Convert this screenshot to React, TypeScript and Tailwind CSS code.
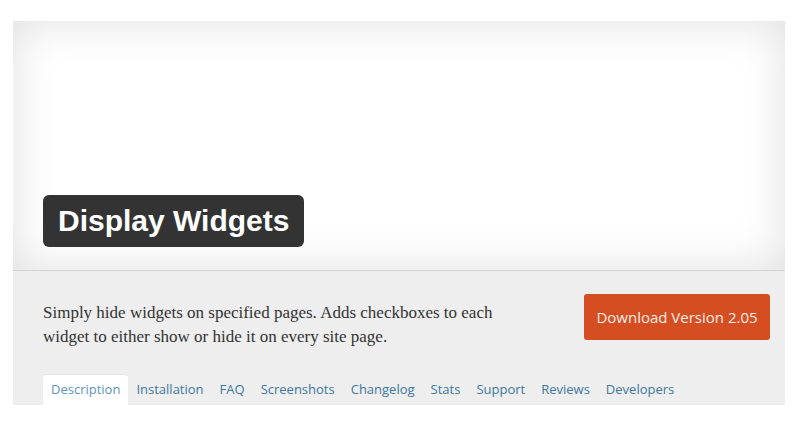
import React from 'react';

const tabs = ['Description', 'Installation', 'FAQ', 'Screenshots', 'Changelog', 'Stats', 'Support', 'Reviews', 'Developers'];

const App: React.FC = () => {
    return (
        <div className="w-[796px] h-[425px] bg-white pt-[21px] pl-[13px] overflow-hidden">
            <div className="w-[772px]">
                {/* Banner */}
                <div className="h-[250px] bg-white shadow-[inset_0_0_45px_rgba(0,0,0,0.13)] flex items-end px-[30px] pb-[23px] border-b border-[#d4d4d4]">
                    <h2 className="h-[52px] flex items-center px-[15px] rounded-[6px] bg-[#333333] text-white font-bold text-[30px] leading-none font-['Liberation_Sans',Arial,sans-serif]">
                        Display Widgets
                    </h2>
                </div>

                {/* Header info */}
                <div className="h-[134px] bg-[#eeeeee] pl-[30px] pr-[15px] pt-[23px] flex flex-col justify-between">
                    <div className="flex items-start justify-between">
                        <p className="mt-[7px] text-[17px] leading-[24px] text-[#333333] font-['Liberation_Serif',Georgia,serif]">
                            <span className="block">Simply hide widgets on specified pages. Adds checkboxes to each</span>
                            <span className="block">widget to either show or hide it on every site page.</span>
                        </p>
                        <button className="w-[186px] h-[46px] rounded-[3px] bg-[#d54e21] text-[#fbeee9] text-[15px] font-['Open_Sans',sans-serif]">
                            Download Version 2.05
                        </button>
                    </div>
                    <div className="flex h-[30px] font-['Open_Sans',sans-serif] text-[13px]">
                        {tabs.map((t, i) => (
                            <div
                                key={t}
                                className={
                                    i === 0
                                        ? 'px-[8px] flex items-center bg-white rounded-t-[3px] text-[#5e95bd] shadow-[0_-1px_0_rgba(0,0,0,0.04)]'
                                        : 'px-[8px] flex items-center text-[#3d77a0]'
                                }
                            >
                                {t}
                            </div>
                        ))}
                    </div>
                </div>
            </div>
        </div>
    );
};

export default App;
